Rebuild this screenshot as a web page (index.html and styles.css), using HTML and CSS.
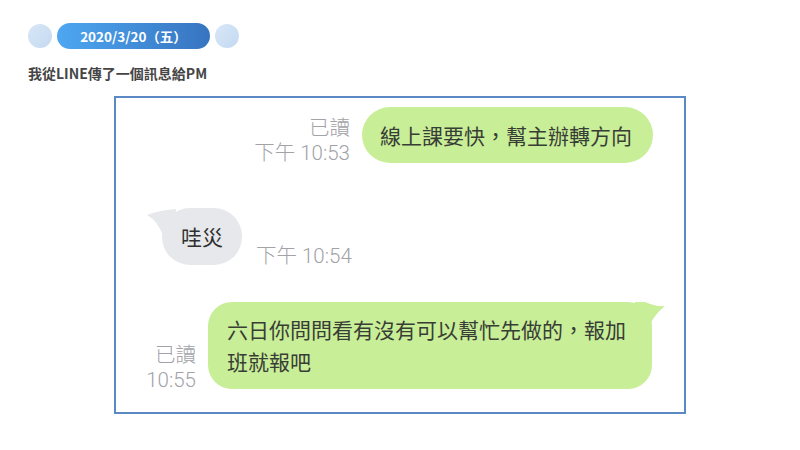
FILE: index.html
```html
<!DOCTYPE html>
<html lang="zh-Hant">
<head>
<meta charset="utf-8">
<title>LINE 訊息</title>
<link rel="stylesheet" href="styles.css">
</head>
<body>
<div class="page">
  <div class="date-row">
    <span class="dot"></span>
    <span class="date-pill">2020/3/20（五）</span>
    <span class="dot"></span>
  </div>
  <p class="caption">我從LINE傳了一個訊息給PM</p>
  <div class="chat">
    <div class="row row-out row-1">
      <div class="meta meta-1"><div>已讀</div><div>下午 10:53</div></div>
      <div class="bubble bubble-green bubble-pill">線上課要快，幫主辦轉方向</div>
    </div>
    <div class="row row-in">
      <div class="bubble bubble-gray bubble-short">
        <svg class="tail tail-left" width="30" height="30" viewBox="0 0 30 30"><path d="M30 1 Q14 2 1 7 Q12 13 17 28 L30 28 Z" fill="#e7e8eb"/></svg>
        <span class="btext">哇災</span>
      </div>
      <div class="meta meta-2"><div>下午 10:54</div></div>
    </div>
    <div class="row row-out row-3">
      <div class="meta meta-3"><div>已讀</div><div>10:55</div></div>
      <div class="bubble bubble-green bubble-long">
        <svg class="tail tail-right" width="32" height="30" viewBox="0 0 32 30"><path d="M0 0 L10 0 Q21 5 30 4 Q21 11 15 22 L0 22 Z" fill="#c8ee98"/></svg>
        <p class="btext">六日你問問看有沒有可以幫忙先做的，報加班就報吧</p>
      </div>
    </div>
  </div>
</div>
</body>
</html>
```

FILE: styles.css
```css
* { box-sizing: border-box; }
html, body { margin: 0; padding: 0; background: #ffffff; }
body {
  font-family: "Noto Sans CJK TC", "Noto Sans", sans-serif;
  width: 800px;
  height: 450px;
  overflow: hidden;
}
.page { padding: 23px 0 0 28px; }

.date-row {
  display: flex;
  align-items: center;
  gap: 5px;
  height: 26px;
}
.dot {
  width: 24px;
  height: 24px;
  border-radius: 50%;
  background: linear-gradient(135deg, #d8e7f7, #c4d9f0);
}
.date-pill {
  width: 153px;
  height: 26px;
  border-radius: 13px;
  background: linear-gradient(90deg, #4ea7f1, #3774c0);
  color: #ffffff;
  font-weight: 700;
  font-size: 13.5px;
  line-height: 26px;
  text-align: center;
}
.caption {
  margin: 15px 0 0 0;
  font-size: 14px;
  line-height: 18px;
  font-weight: 700;
  color: #454545;
}

.chat {
  margin: 14px 0 0 86px;
  width: 572px;
  height: 318px;
  border: 2px solid #5a89c3;
  display: flex;
  flex-direction: column;
}
.row { display: flex; align-items: flex-end; }
.row-out { justify-content: flex-end; }
.row-1 { padding: 9px 31px 0 0; }
.row-in { margin-top: 45px; padding-left: 46px; }
.row-3 { margin-top: 37px; padding-right: 32px; }

.meta {
  font-family: Roboto, "Noto Sans CJK TC", sans-serif;
  font-weight: 300;
  font-size: 20.5px;
  line-height: 25px;
  color: #a2a2a7;
  text-align: right;
  white-space: nowrap;
}
.meta-1 { margin: 0 12px -3px 0; }
.meta-2 { margin: 0 0 -4px 14px; text-align: left; }
.meta-3 { margin: 0 12px -4px 0; }

.bubble {
  position: relative;
  font-size: 21px;
  color: #383d35;
}
.bubble-green { background: #c8ee98; }
.bubble-gray { background: #e7e8eb; }
.bubble-pill {
  height: 56px;
  line-height: 56px;
  padding: 0 21px 0 18px;
  border-radius: 28px;
  white-space: nowrap;
}
.bubble-short {
  height: 57px;
  line-height: 57px;
  padding: 0 19px;
  border-radius: 28px;
  color: #2f2f2f;
}
.bubble-long {
  width: 444px;
  padding: 11px 19px 12px 19px;
  line-height: 32px;
  border-radius: 24px;
}
.btext { position: relative; margin: 0; }
.tail { position: absolute; top: 0; }
.tail-left { left: -16px; }
.tail-right { right: -15px; }
```
